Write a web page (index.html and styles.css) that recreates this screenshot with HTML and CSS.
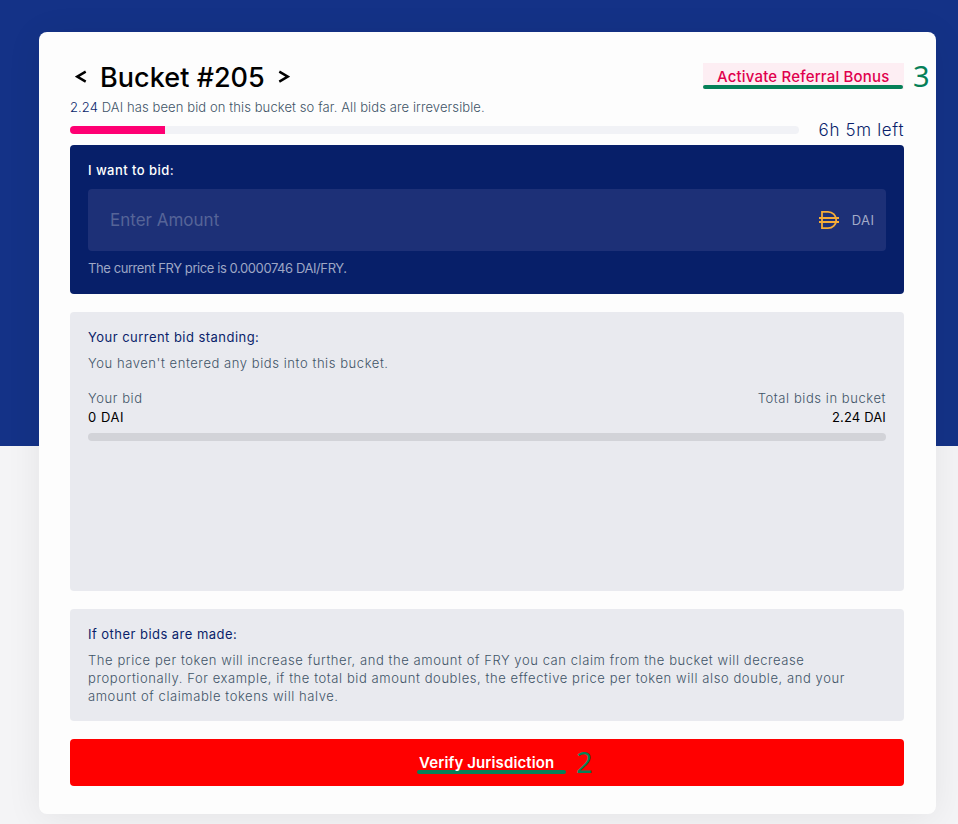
FILE: index.html
```html
<!DOCTYPE html>
<html lang="en">
<head>
<meta charset="utf-8">
<title>Bucket #205</title>
<link rel="stylesheet" href="styles.css">
</head>
<body>
<main class="card">
  <header class="head">
    <h1 class="title">
      <svg class="chev" viewBox="0 0 12 14"><path d="M10.700 1.600 2.200 6.600l8.500 5"/></svg>
      <span class="name">Bucket #205</span>
      <svg class="chev" viewBox="0 0 12 14"><path d="M1.300 1.600 9.800 6.600l-8.500 5"/></svg>
    </h1>
    <a class="referral"><span>Activate Referral Bonus</span><i class="mark mark-top"></i><b class="num num-top">3</b></a>
  </header>
  <p class="summary"><span class="navy">2.24</span> DAI has been bid on this bucket so far. All bids are irreversible.</p>
  <div class="progress">
    <div class="track"><div class="fill"></div></div>
    <span class="left">6h 5m left</span>
  </div>
  <section class="bid">
    <label class="bid-label">I want to bid:</label>
    <div class="field">
      <span class="placeholder">Enter Amount</span>
      <svg class="dai" viewBox="0 0 22 20"><path d="M4 1.800h6c4.500 0 8.200 3.400 8.200 8.200s-3.700 8.200-8.200 8.200H4zM1 8h20M1 12h20"/></svg>
      <span class="unit">DAI</span>
    </div>
    <p class="price">The current FRY price is 0.0000746 DAI/FRY.</p>
  </section>
  <section class="panel standing">
    <h2 class="h-standing">Your current bid standing:</h2>
    <p class="t-none">You haven't entered any bids into this bucket.</p>
    <div class="totals">
      <div><p class="t-your">Your bid</p><p class="value v-zero">0 DAI</p></div>
      <div class="right"><p class="t-total">Total bids in bucket</p><p class="value v-total">2.24 DAI</p></div>
    </div>
    <div class="bar"></div>
  </section>
  <section class="panel other">
    <h2 class="h-other">If other bids are made:</h2>
    <p class="l1">The price per token will increase further, and the amount of FRY you can claim from the bucket will decrease</p>
    <p class="l2">proportionally. For example, if the total bid amount doubles, the effective price per token will also double, and your</p>
    <p class="l3">amount of claimable tokens will halve.</p>
  </section>
  <button class="verify"><i class="mark mark-bottom"></i><span class="verify-text">Verify Jurisdiction</span><b class="num num-bottom">2</b></button>
</main>
</body>
</html>
```
FILE: styles.css
```css
* { box-sizing: border-box; }
body {
  margin: 0;
  height: 824px;
  overflow: hidden;
  padding: 32px 22px 0 39px;
  background: linear-gradient(#143287 446px, #f4f4f6 446px);
  font-family: Inter, "Liberation Sans", sans-serif;
  font-size: 13px;
  color: #3f5467;
}
h1, h2, p { margin: 0; font-weight: 400; white-space: nowrap; }
.card {
  width: 897px;
  height: 782px;
  padding: 31px 32px 0 31px;
  border-radius: 8px;
  background: #fdfdfd;
  box-shadow: 0 4px 36px rgba(0, 0, 0, .07);
}
.head { display: flex; justify-content: space-between; height: 35px; }
.title { display: flex; align-items: center; height: 28px; padding-left: 5px; color: #000; }
.name { margin: 0 13px; font-size: 27px; font-weight: 500; letter-spacing: .05px; }
.chev { width: 12px; height: 14px; fill: none; stroke: #000; stroke-width: 2.400; }
.referral {
  position: relative;
  width: 201px;
  height: 26px;
  padding-left: 14px;
  background: #fdeef3;
  color: #e0004d;
  font-size: 15px;
  font-weight: 500;
  line-height: 27px;
  letter-spacing: .18px;
  white-space: nowrap;
}
.mark { position: absolute; height: 4px; border-radius: 2px; background: #068058; }
.mark-top { left: 0; top: 22px; width: 200px; }
.num {
  position: absolute;
  font: 400 29px/30px "Noto Sans", sans-serif;
  color: #068058;
}
.num-top { left: 210px; top: -2px; }
.summary { height: 19px; line-height: 19px; font-weight: 300; letter-spacing: .1px; }
.navy { color: #0a1f6b; }
.progress { display: flex; align-items: center; justify-content: space-between; height: 28px; padding-bottom: 3px; }
.track { width: 729px; height: 8px; border-radius: 4px; overflow: hidden; background: #f1f2f6; }
.fill { width: 95px; height: 8px; background: #ff0073; }
.left { font-size: 17px; color: #0a1f6b; white-space: nowrap; font-weight: 300; letter-spacing: .65px; margin-right: -.2px; }
.bid { height: 149px; padding: 16px 18px 0; border-radius: 4px; background: #071f69; }
.bid-label { display: block; height: 28px; line-height: 18px; color: #fff; font-weight: 500; letter-spacing: .45px; white-space: nowrap; }
.field {
  display: flex;
  align-items: center;
  height: 62px;
  padding: 0 12px 0 22px;
  border-radius: 4px;
  background: #1d3077;
}
.placeholder { flex: 1; font-size: 17px; color: #566497; }
.dai { width: 22px; height: 20px; margin-right: 12px; fill: none; stroke: #f5ac37; stroke-width: 1.800; }
.unit { color: #a3abc8; letter-spacing: .4px; margin-right: -.4px; }
.price { height: 34px; line-height: 34px; color: #9ea7c5; letter-spacing: -.42px; }
.panel { margin-top: 18px; padding: 16px 18px 0; border-radius: 4px; background: #e9eaef; }
.panel p { font-weight: 300; line-height: 18px; letter-spacing: .57px; }
.panel h2 { margin-bottom: 8px; font-size: 13px; line-height: 18px; color: #0a1f6b; letter-spacing: .46px; }
.standing { height: 279px; }
.totals { display: flex; justify-content: space-between; margin-top: 17px; }
.right { text-align: right; }
.panel .value { margin-top: 1px; color: #000; font-weight: 400; }
.panel .v-total { letter-spacing: .15px; }
.bar { height: 8px; margin-top: 7px; border-radius: 4px; background: #d2d3d8; }
.other { height: 112px; }
.panel .l2 { letter-spacing: .58px; }
.verify {
  position: relative;
  display: block;
  width: 834px;
  height: 47px;
  margin-top: 18px;
  padding: 0 0 0 349px;
  border: 0;
  border-radius: 4px;
  background: #f00;
  color: #fff;
  font: 600 15px/46px Inter, "Liberation Sans", sans-serif;
  letter-spacing: .12px;
  text-align: left;
}
.mark-bottom { left: 347px; top: 31px; width: 149px; }
.verify-text { position: relative; }
.num-bottom { left: 506px; top: 8px; }
```
